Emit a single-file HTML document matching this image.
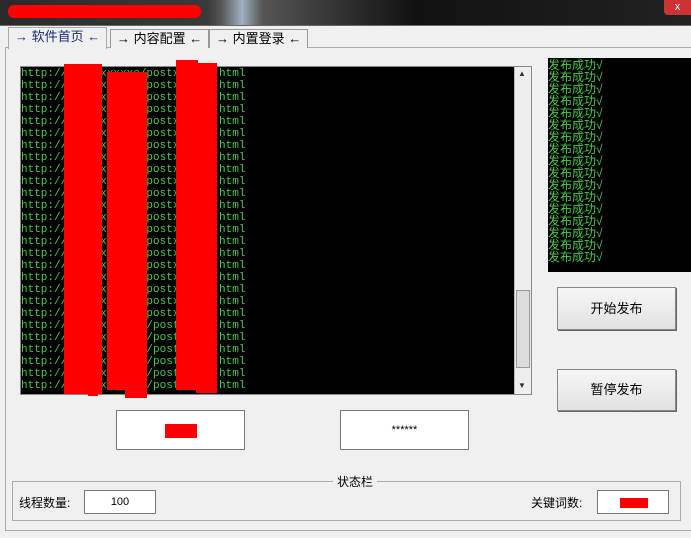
<!DOCTYPE html>
<html><head><meta charset="utf-8"><style>
body{margin:0;width:691px;height:537px;overflow:hidden;background:#f0f0f0;position:relative;font-family:"Liberation Sans","Noto Sans CJK SC",sans-serif;font-size:12px}
.a{position:absolute}
.title{left:0;top:0;width:691px;height:25px;background:linear-gradient(90deg,#2a2a2a 0%,#3a3a3a 30%,#555 32%,#9fb0c0 35%,#555 38%,#111 60%,#222 100%)}
.tab{position:absolute;top:29px;height:18px;border:1px solid #999;border-bottom:none;background:#f0f0f0;font-size:13px;line-height:18px;padding:0 6px}
pre{margin:0;font-family:"Liberation Mono",monospace;font-size:11px;line-height:12px;color:#4cc94c}
.btn{position:absolute;border:1px solid #888;background:linear-gradient(#f6f6f6,#e2e2e2);box-shadow:1px 1px 0 #666;text-align:center;font-size:13px}
.box{position:absolute;background:#fff;border:1px solid #777;text-align:center}
.r{position:absolute;background:#f00}
</style></head><body>
<div class="a title"></div>
<div class="r" style="left:8px;top:5px;width:193px;height:13px;border-radius:6px"></div>
<div class="a" style="left:664px;top:0;width:27px;height:15px;background:#c33;border-radius:0 0 0 4px;color:#fff;font-size:11px;text-align:center;line-height:14px">x</div>
<div class="a" style="left:0;top:25px;width:691px;height:512px;background:#f0f0f0;border-top:1px solid #666"></div>
<div class="a" style="left:5px;top:47px;width:686px;height:482px;border:1px solid #aaa;background:#f0f0f0"></div>
<div class="tab" style="left:8px;top:27px;height:21px;color:#1a2a7a;z-index:2;border-color:#aaa">→ 软件首页 ←</div>
<div class="tab" style="left:110px">→ 内容配置 ←</div>
<div class="tab" style="left:209px">→ 内置登录 ←</div>
<div class="a" style="left:20px;top:66px;width:510px;height:327px;background:#000;border:1px solid #888;overflow:hidden">
<pre style="padding-top:1px">http://xxxxxxxxxxo/postxxxxxx.html
http://xxxxxxxxxxo/postxxxxxx.html
http://xxxxxxxxxxo/postxxxxxx.html
http://xxxxxxxxxxo/postxxxxxx.html
http://xxxxxxxxxxo/postxxxxxx.html
http://xxxxxxxxxxo/postxxxxxx.html
http://xxxxxxxxxxo/postxxxxxx.html
http://xxxxxxxxxxo/postxxxxxx.html
http://xxxxxxxxxxo/postxxxxxx.html
http://xxxxxxxxxxo/postxxxxxx.html
http://xxxxxxxxxxo/postxxxxxx.html
http://xxxxxxxxxxo/postxxxxxx.html
http://xxxxxxxxxxo/postxxxxxx.html
http://xxxxxxxxxxo/postxxxxxx.html
http://xxxxxxxxxxo/postxxxxxx.html
http://xxxxxxxxxxo/postxxxxxx.html
http://xxxxxxxxxxo/postxxxxxx.html
http://xxxxxxxxxxo/postxxxxxx.html
http://xxxxxxxxxxo/postxxxxxx.html
http://xxxxxxxxxxo/postxxxxxx.html
http://xxxxxxxxxxo/postxxxxxx.html
http://xxxxxxxxxxco/postxxxxx.html
http://xxxxxxxxxxco/postxxxxx.html
http://xxxxxxxxxxco/postxxxxx.html
http://xxxxxxxxxxco/postxxxxx.html
http://xxxxxxxxxxco/postxxxxx.html
http://xxxxxxxxxxco/postxxxxx.html</pre>
<div class="a" style="left:493px;top:0;width:17px;height:327px;background:#eee;border-left:1px solid #bbb"></div>
<div class="a" style="left:495px;top:223px;width:12px;height:76px;background:#ddd;border:1px solid #999"></div>
<div class="a" style="left:497px;top:2px;font-size:8px;color:#333">▲</div>
<div class="a" style="left:497px;top:314px;font-size:8px;color:#333">▼</div>
</div>
<div class="r" style="left:64px;top:64px;width:38px;height:330px"></div>
<div class="r" style="left:88px;top:380px;width:10px;height:16px"></div>
<div class="r" style="left:107px;top:72px;width:26px;height:318px"></div>
<div class="r" style="left:125px;top:72px;width:22px;height:326px"></div>
<div class="r" style="left:176px;top:60px;width:22px;height:330px"></div>
<div class="r" style="left:196px;top:63px;width:21px;height:330px"></div>
<div class="a" style="left:548px;top:58px;width:143px;height:214px;background:#000">
<pre style="font-family:'Liberation Sans','Noto Sans CJK SC',sans-serif;font-size:12px;line-height:12px;padding-top:1px">发布成功√
发布成功√
发布成功√
发布成功√
发布成功√
发布成功√
发布成功√
发布成功√
发布成功√
发布成功√
发布成功√
发布成功√
发布成功√
发布成功√
发布成功√
发布成功√
发布成功√</pre></div>
<div class="btn" style="left:557px;top:287px;width:117px;height:41px;line-height:41px">开始发布</div>
<div class="btn" style="left:557px;top:369px;width:117px;height:40px;line-height:40px">暂停发布</div>
<div class="box" style="left:116px;top:410px;width:127px;height:38px"><div class="r" style="left:48px;top:13px;width:32px;height:14px"></div></div>
<div class="box" style="left:340px;top:410px;width:127px;height:38px;line-height:38px;font-size:11px">******</div>
<div class="a" style="left:12px;top:481px;width:667px;height:38px;border:1px solid #aaa"></div>
<div class="a" style="left:333px;top:473px;background:#f0f0f0;padding:0 4px;font-size:12px">状态栏</div>
<div class="a" style="left:19px;top:494px;font-size:12px">线程数量:</div>
<div class="box" style="left:84px;top:490px;width:70px;height:22px;line-height:22px;font-size:11px">100</div>
<div class="a" style="left:531px;top:494px;font-size:12px">关键词数:</div>
<div class="box" style="left:597px;top:490px;width:70px;height:22px"><div class="r" style="left:22px;top:7px;width:28px;height:10px"></div></div>
</body></html>
